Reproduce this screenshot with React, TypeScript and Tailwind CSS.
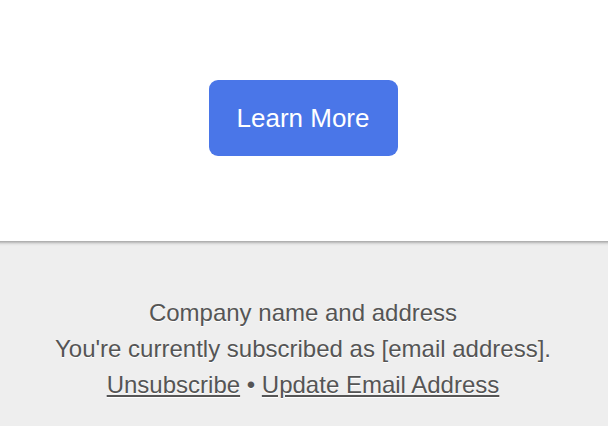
export default function App() {
  return (
    <div className="min-h-screen bg-white font-['Liberation_Sans',Arial,sans-serif]">
      <section className="flex h-[241px] items-start justify-center pt-[80px] pr-[2px]">
        <a
          href="#"
          className="flex h-[76px] w-[189px] items-center justify-center rounded-[9px] bg-[#4a76e8] text-[26px] text-white"
        >
          Learn More
        </a>
      </section>
      <footer className="h-[185px] bg-[linear-gradient(to_bottom,#a8a8a8_0px,#b8b8b8_1px,#cdcdcd_2px,#e2e2e2_3px,#eeeeee_5px)] pt-[54px] pr-[2px] text-center text-[24px] leading-[36px] text-[#555] [text-shadow:0_1px_0_#fff]">
        <p>Company name and address</p>
        <p>You're currently subscribed as [email address].</p>
        <p>
          <a href="#" className="underline">Unsubscribe</a> •{' '}
          <a href="#" className="underline">Update Email Address</a>
        </p>
      </footer>
    </div>
  );
}
